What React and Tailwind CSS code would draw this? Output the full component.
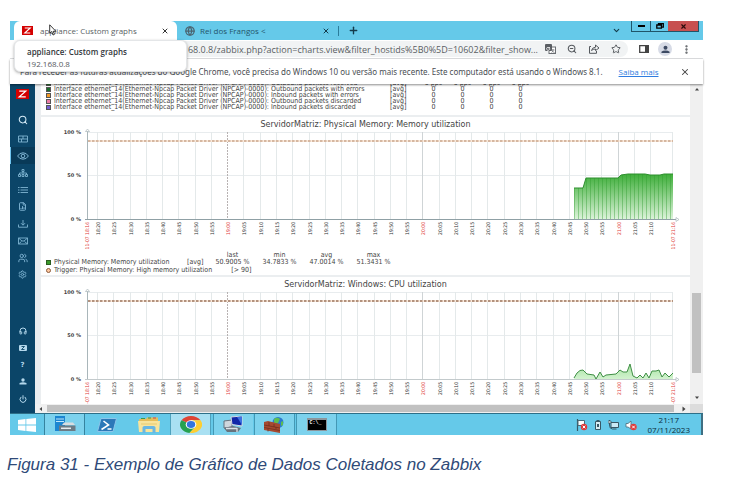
import React from "react";
import {
  Search, Users, Settings, FileChartColumn,
  Headphones, Power, X, Plus, ChevronDown, Star, ZoomOut,
  EllipsisVertical, Globe,
} from "lucide-react";

const ui = "font-['Open_Sans','Noto_Sans',sans-serif]";
const dv = "font-['DejaVu_Sans',sans-serif]";
const dvc = "font-['DejaVu_Sans_Condensed','DejaVu_Sans',sans-serif]";

const line = { viewBox: "0 0 10 8", className: "h-[8px] w-[10px]", fill: "none", stroke: "currentColor", strokeWidth: ".9", "aria-hidden": true };

const mainNav = [
  ["Dashboards", <svg {...line}><path d="M.5 1h9v6h-9zM.5 4h9M5 1v3M3.500 4v3" /></svg>],
  ["Monitoring", <svg viewBox="0 0 12 8" className="h-[8px] w-[12px]" fill="none" stroke="currentColor"><path d="M.6 4Q2.500.8 6 .8T11.400 4Q9.500 7.200 6 7.200T.6 4z" /><circle cx="6" cy="4" r="1.800" /></svg>],
  ["Services", <svg {...line}><path d="M4 .5h2v2H4zM5 2.500v2M1.500 5.500V4h7v1.500M.5 5.500h2v2h-2zM4 5.500h2v2H4zM7.500 5.500h2v2h-2z" /></svg>],
  ["Inventory", <svg {...line}><path d="M0 1.500h1.500M2.500 1.500H10M0 4h1.500M2.500 4H10M0 6.500h1.500M2.500 6.500H10" /></svg>],
  ["Reports", <FileChartColumn size={9} strokeWidth={2.5} />],
  ["Data collection", <svg {...line}><path d="M5 0v5M3 3.200l2 2 2-2M.5 4.500v2.700h9V4.500" /></svg>],
  ["Alerts", <svg {...line}><path d="M.5 1h9v6h-9zl3.500 3h2l3.500-3M.5 7l3-2.500M9.500 7l-3-2.500" /></svg>],
  ["Users", <Users size={10} strokeWidth={2.2} />],
  ["Administration", <Settings size={9} strokeWidth={2.4} />],
];

function ZLogo({ className }) {
  return (
    <svg viewBox="0 0 12 10" preserveAspectRatio="none" className={className} aria-hidden="true">
      <rect width="12" height="10" fill="#d40000" />
      <path d="M3 2.2h6L3 7.8h6" fill="none" stroke="#fff" strokeWidth="1.2" />
    </svg>
  );
}

function TabStrip() {
  return (
    <div className="flex h-[19px] items-start bg-[#65c9e9] pl-1">
      <div className="flex h-[19px] w-[163px] items-center rounded-t-md bg-white px-2">
        <ZLogo className="h-[9px] w-[11px] shrink-0" />
        <span className="ml-[7px] flex-1 truncate text-[8px] leading-[12px] text-[#5a5f64]">appliance: Custom graphs</span>
        <button aria-label="Fechar guia"><X size={8} strokeWidth={3} color="#333" /></button>
      </div>
      <div className="flex h-[19px] w-[161px] items-center px-2">
        <Globe size={10} strokeWidth={3} color="#4b6470" className="shrink-0" />
        <span className="ml-[5px] flex-1 truncate text-[8px] leading-[12px] text-[#24556b]">Rei dos Frangos &lt;</span>
        <button aria-label="Fechar guia"><X size={8} strokeWidth={3} color="#143b4b" /></button>
      </div>
      <span className="mt-[5px] h-[10px] w-px bg-[#2b7c9b]" />
      <button aria-label="Nova guia" className="ml-[9px] flex h-[19px] items-center"><Plus size={11} strokeWidth={3} color="#143b4b" /></button>
      <div className="flex-1" />
      <button aria-label="Pesquisar guias" className="mr-[10px] flex h-[19px] items-center"><ChevronDown size={9} strokeWidth={3} color="#143b4b" /></button>
      <div className="mr-1 flex h-[11px] border border-t-0 border-[#1f5569]">
        <button aria-label="Minimizar" className="flex w-[19px] items-center justify-center border-r border-[#1f5569]">
          <span className="h-[2px] w-[7px] bg-black" />
        </button>
        <button aria-label="Restaurar" className="flex w-[17px] items-center justify-center">
          <svg viewBox="0 0 8 6" className="h-[6px] w-[8px]"><path d="M2.5 1.5V.7h4.8v3.5H6M.8 2h4.6v3.2H.8z" fill="none" stroke="#000" strokeWidth="1.3" /></svg>
        </button>
        <button aria-label="Fechar" className="flex w-[30px] items-center justify-center bg-[#c75050]">
          <X size={7} strokeWidth={4} color="#2a0b0b" />
        </button>
      </div>
    </div>
  );
}

function Toolbar() {
  return (
    <div className="flex h-[19px] items-center border-b border-[#dfe1e3] bg-white pr-[11px] text-[#55595e]">
      <div className="ml-[140px] flex h-[16px] flex-1 items-center rounded-full bg-[#f1f3f4] pl-[15px] pr-[7px]">
        <input
          aria-label="Endereço"
          readOnly
          defaultValue="192.168.0.8/zabbix.php?action=charts.view&filter_hostids%5B0%5D=10602&filter_show..."
          className="min-w-0 flex-1 bg-transparent text-[9px] leading-[13px] text-[#5a5e63] outline-none"
        />
        <div className="ml-1 flex shrink-0 items-center gap-[11px]">
          <button aria-label="Traduzir">
            <svg viewBox="0 0 11 10" className="h-[10px] w-[11px]">
              <rect x="4" y="3" width="6.5" height="6.5" fill="#fff" stroke="#6a6e73" />
              <rect width="7" height="7" rx="1" fill="#5a5e63" />
              <path d="M5 3.5H2.2a1.6 1.6 0 1 0 2.6 1.2H3.6" stroke="#fff" strokeWidth=".8" fill="none" />
              <path d="M6.5 6h3M8 5v1q0 2-1.5 2.5M7 6.5q1 2 2.5 2" stroke="#6a6e73" strokeWidth=".7" fill="none" />
            </svg>
          </button>
          <button aria-label="Zoom"><ZoomOut size={10} strokeWidth={2.5} /></button>
          <button aria-label="Compartilhar">
            <svg viewBox="0 0 12 10" className="h-[10px] w-[12px]" fill="none" stroke="#55595e" strokeWidth="1">
              <path d="M3 2.5H1.5v6.8h7V7" /><path d="M3.5 6.5Q4 3.5 7.5 3.2V1L11 4 7.5 6.6V5Q5 5 3.500 6.5z" />
            </svg>
          </button>
          <button aria-label="Favoritos"><Star size={10} strokeWidth={2.3} /></button>
        </div>
      </div>
      <button aria-label="Painel lateral" className="ml-[11px]">
        <svg viewBox="0 0 10 8" className="h-[8px] w-[10px]"><path d="M.7.7h8.600v6.600H.7z" fill="none" stroke="#444" strokeWidth="1.3" /><path d="M6 0h4v8H6z" fill="#444" /></svg>
      </button>
      <button aria-label="Perfil" className="ml-[9px] flex size-[14px] items-center justify-center rounded-full bg-[#d7dbe6]">
        <svg viewBox="0 0 10 10" className="size-[9px]"><circle cx="5" cy="3" r="2.200" fill="#3d4a63" /><path d="M.5 9V7.500Q2 6 5 6t4.500 1.500V9z" fill="#3d4a63" /></svg>
      </button>
      <button aria-label="Menu" className="ml-[9px]"><EllipsisVertical size={11} strokeWidth={3} /></button>
    </div>
  );
}

function InfoBar() {
  return (
    <div className="relative z-10 flex h-[25px] items-center bg-white pl-[10px] pr-[13px] text-[8px] leading-[12px] text-[#4a4e53] shadow-[0_1px_2px_rgba(0,0,0,0.45)]">
      <p className="truncate font-['Noto_Sans',sans-serif]">
        Para receber as futuras atualizações do Google Chrome, você precisa do Windows 10 ou versão mais recente. Este computador está usando o Windows 8.1.
      </p>
      <a href="#saiba" className="ml-4 whitespace-nowrap text-[#2f7de0] underline">Saiba mais</a>
      <button aria-label="Dispensar" className="ml-auto"><X size={10} strokeWidth={2.5} color="#444" /></button>
    </div>
  );
}

function Sidebar() {
  const item = "flex h-[17px] w-full items-center justify-center";
  return (
    <nav aria-label="Zabbix" className="flex w-[25px] shrink-0 flex-col items-center bg-[#0b4568] pb-[6px] pt-[5px] text-[#7fb4d3]">
      <a href="#home" aria-label="Zabbix"><ZLogo className="h-[10px] w-[13px]" /></a>
      <button aria-label="Search" className="mb-[2px] mt-[12px] flex h-[17px] items-center text-[#d8edf8]"><Search size={10} strokeWidth={2.5} /></button>
      <div className="flex w-full flex-col">
        {mainNav.map(([label, icon], i) => (
          <button key={label} aria-label={label} className={i === 1 ? `${item} border-l border-[#6fc4f0] bg-[#093a58]` : item}>{icon}</button>
        ))}
      </div>
      <div className="mt-auto flex w-full flex-col text-[#b4d8ec]">
        <button aria-label="Support" className={item}><Headphones size={8} strokeWidth={3} /></button>
        <button aria-label="Integrations" className={item}>
          <svg viewBox="0 0 8 6" className="h-[6px] w-[8px]"><rect width="8" height="6" rx="1" fill="#b4d8ec" /><path d="M2.500 1.500h3l-3 3h3" fill="none" stroke="#0b4568" strokeWidth=".9" /></svg>
        </button>
        <button aria-label="Help" className={`${item} ${dv} text-[7px] font-bold leading-[10px]`}>?</button>
        <button aria-label="User settings" className={item}>
          <svg viewBox="0 0 8 7" className="h-[7px] w-[8px]" fill="currentColor"><circle cx="4" cy="2" r="1.700" /><path d="M.5 6.500V5Q4 3.600 7.500 5v1.500z" /></svg>
        </button>
        <button aria-label="Sign out" className={item}><Power size={8} strokeWidth={3} /></button>
      </div>
    </nav>
  );
}

const interfaceRows = [
  ["bg-[#2e7d32]", "Outbound packets received", "0 pps"],
  ["bg-[#1a6b2c]", "Outbound packets with errors", "0"],
  ["bg-[#f29a25]", "Inbound packets with errors", "0"],
  ["bg-[#ec7ba6]", "Outbound packets discarded", "0"],
  ["bg-[#7460d0]", "Inbound packets discarded", "0"],
];

function InterfaceLegend() {
  return (
    <div className="flex h-[31px] shrink-0 flex-col justify-end overflow-hidden bg-white pb-[5px] pl-[5px]">
      <table className={`w-[489px] table-fixed border-collapse text-[7px] leading-[6px] text-[#444] ${dvc}`}>
        <colgroup><col className="w-[344px]" /><col className="w-[29px]" /><col className="w-[29px]" /><col className="w-[29px]" /><col className="w-[29px]" /><col className="w-[29px]" /></colgroup>
        <tbody>
          {interfaceRows.map(([swatch, name, value]) => (
            <tr key={name} className="h-[6px]">
              <th scope="row" className="whitespace-nowrap p-0 text-left font-normal">
                <span className="flex h-[6px] items-center gap-[3px]">
                  <span className={`size-[5px] border border-[#555] ${swatch}`} />
                  Interface ethernet_14(Ethernet-Npcap Packet Driver (NPCAP)-0000): {name}
                </span>
              </th>
              <td className="p-0">[avg]</td>
              {[0, 1, 2, 3].map((k) => <td key={k} className="whitespace-nowrap p-0 text-center">{value}</td>)}
            </tr>
          ))}
        </tbody>
      </table>
    </div>
  );
}

const memory = [[574, 188], [583, 188], [586, 178], [618, 178], [621, 175], [628, 174], [645, 174], [650, 175], [660, 175], [664, 174], [673, 174]]
  .map(([x, y]) => [x - 41, y - 129]);
const cpu = [[574, 378], [577, 373], [580, 370.5], [583, 370], [587, 374], [594, 375], [596, 379], [600, 372], [603, 377], [606, 375], [616, 374], [620, 370], [623, 372], [627, 372], [630, 364], [633, 376], [637, 378], [640, 375], [643, 378], [646, 373], [649, 378], [652, 371], [656, 371], [659, 370], [662, 377], [665, 373], [669, 377], [673, 373]]
  .map(([x, y]) => [x - 41, y - 289]);

const ticks = Array.from({ length: 35 }, (_, i) => {
  const m = 20 + i * 5;
  return { x: 57 + i * 16.27, label: `${18 + Math.floor(m / 60)}:${String(m % 60).padStart(2, "0")}`, hour: m % 60 === 0 };
});

function Plot({ id, data, triggerColor, solid }) {
  const points = data.map((p) => p.join(",")).join(" ");
  const area = `${data[0][0]},90 ${points} 632,90`;
  return (
    <svg viewBox="0 0 649 122" className={`block w-full ${dv}`} role="img" aria-label={id}>
      <defs>
        <linearGradient id={id} x1="0" x2="0" y1="0" y2="1">
          <stop offset="0" stopColor={solid ? "#3fae3a" : "#a5e3a0"} />
          <stop offset="1" stopColor={solid ? "#dcf3da" : "#d2f2cf"} />
        </linearGradient>
        <clipPath id={`${id}-clip`}><polygon points={area} /></clipPath>
      </defs>
      <path d="M46 3.500H632M46 46.500H632" stroke="#e8ecee" />
      {ticks.map((t) => (
        <path key={t.label} d={`M${Math.round(t.x) - 0.5} 3V90`} stroke={t.label === "19:00" ? "#b8b2b2" : t.hour ? "#cfd4d6" : "#e4e9ea"} strokeDasharray={t.label === "19:00" ? "2 1" : undefined} />
      ))}
      <path d="M631.500 3V90" stroke="#e4e9ea" />
      <polygon points={area} fill={`url(#${id})`} />
      {solid && (
        <g clipPath={`url(#${id}-clip)`} stroke="#2c9a2c" strokeOpacity=".4">
          {Array.from({ length: 26 }, (_, i) => <path key={i} d={`M${533.5 + i * 4} 40V90`} />)}
        </g>
      )}
      <polyline points={points} fill="none" stroke={solid ? "#2f8f2f" : "#3f8f45"} strokeWidth="1" />
      <path d="M46 12H632" stroke="#fbeadb" strokeWidth="2" />
      <path d="M47 12H632" stroke={triggerColor} strokeWidth="1.200" strokeDasharray="2.500 1.500" />
      <path d="M46.500 1V90" stroke="#a9b6ba" />
      <path d="M44 90.500H637" stroke={solid ? "#8fa0a5" : "#c3cacc"} />
      <path d="M44.500 2.500l2-2.500 2 2.500z" fill="#fff" stroke="#a9b6ba" strokeWidth=".7" />
      <path d="M635 88.500l3 2-3 2z" fill="#fff" stroke="#a9b6ba" strokeWidth=".7" />
      <g fontSize="5" fontWeight="bold" fill="#444" textAnchor="end">
        <text x="40" y="5">100 %</text>
        <text x="40" y="48">50 %</text>
        <text x="40" y="92">0 %</text>
      </g>
      <g fontSize="5" textAnchor="end" className={dvc}>
        {ticks.map((t) => (
          <text key={t.label} transform={`translate(${Math.round(t.x) + 2} 93) rotate(-90)`} fill={t.hour ? "#e03a3a" : "#333"}>{t.label}</text>
        ))}
        <text transform="translate(48 93) rotate(-90)" fill="#e03a3a">11-07 18:16</text>
        <text transform="translate(634 93) rotate(-90)" fill="#e03a3a">11-07 21:16</text>
      </g>
    </svg>
  );
}

function Chart({ title, children }) {
  return (
    <section className="bg-white pt-1">
      <h2 className="text-center text-[8px] leading-[8px] text-[#444]">{title}</h2>
      {children}
    </section>
  );
}

function MemoryLegend() {
  return (
    <div className={`pb-px pl-[5px] pt-px text-[7px] leading-[7px] text-[#444] ${dvc}`}>
      <table className="w-[351px] table-fixed border-collapse">
        <colgroup><col className="w-[141px]" /><col className="w-[22px]" /><col className="w-[47px]" /><col className="w-[47px]" /><col className="w-[47px]" /><col className="w-[47px]" /></colgroup>
        <thead>
          <tr><td className="p-0" /><td className="p-0" />{["last", "min", "avg", "max"].map((h) => <th key={h} scope="col" className="p-0 text-center font-normal">{h}</th>)}</tr>
        </thead>
        <tbody>
          <tr>
            <th scope="row" className="whitespace-nowrap p-0 text-left font-normal">
              <span className="flex items-center gap-[3px]"><span className="size-[5px] border border-[#2b5d20] bg-[#3a9a2c]" />Physical Memory: Memory utilization</span>
            </th>
            <td className="p-0">[avg]</td>
            {["50.9005 %", "34.7833 %", "47.0014 %", "51.3431 %"].map((v) => <td key={v} className="whitespace-nowrap p-0 text-center">{v}</td>)}
          </tr>
        </tbody>
      </table>
      <p className="flex items-center gap-[3px] pt-px">
        <span className="size-[5px] rounded-full border border-[#8a5a3c] bg-[#ffc8a0]" />
        <span>Trigger: Physical Memory: High memory utilization</span>
        <span className="ml-4">[&gt; 90]</span>
      </p>
    </div>
  );
}

function Arrow({ d }) {
  return <svg viewBox="0 0 6 6" className="size-[6px]" aria-hidden="true"><path d={d} fill="#444" /></svg>;
}

function Page() {
  return (
    <div className="flex h-[329px]">
      <Sidebar />
      <div className="flex min-w-0 flex-1 flex-col">
        <div className="flex min-h-0 flex-1">
          <main className={`flex min-w-0 flex-1 flex-col gap-[2px] overflow-hidden bg-[#ebeef0] pl-[6px] ${dv}`}>
            <InterfaceLegend />
            <Chart title="ServidorMatriz: Physical Memory: Memory utilization">
              <Plot id="memory" data={memory} triggerColor="#b08468" solid />
              <MemoryLegend />
            </Chart>
            <Chart title="ServidorMatriz: Windows: CPU utilization">
              <Plot id="cpu" data={cpu} triggerColor="#6b3a22" />
            </Chart>
          </main>
          <div className="flex w-[13px] flex-col items-center bg-[#f0f0f0] pb-[3px] pt-[2px]">
            <Arrow d="M1 4.500l2-2.500 2 2.500z" />
            <div className="mt-auto h-[80px] w-[9px] bg-[#c1c1c1]" />
            <div className="mt-[22px]"><Arrow d="M1 1.500l2 2.500 2-2.500z" /></div>
          </div>
        </div>
        <div className="flex h-[9px] items-center bg-[#f0f0f0] pl-[3px]">
          <Arrow d="M4 1L1.500 3 4 5z" />
          <div className="ml-[3px] h-[7px] flex-1 bg-[#c1c1c1]" />
          <div className="ml-[7px] mr-[3px]"><Arrow d="M1.500.500L4.500 3l-3 2.500z" /></div>
          <div className="h-full w-[13px] bg-[#dcdcdc]" />
        </div>
      </div>
    </div>
  );
}

function BadBadge({ x }) {
  return (<g><circle cx={x} cy="8" r="3.200" fill="#dc3c3c" /><path d={`M${x - 1.3} 6.700l2.600 2.600m0-2.600l-2.600 2.600`} stroke="#fff" strokeWidth="1" /></g>);
}

function Taskbar() {
  const b = "flex h-full items-center justify-center";
  return (
    <div className="flex h-[22px] border-t border-[#2d6f88] bg-[#65c9e9]">
      <button aria-label="Iniciar" className={`${b} w-[34px]`}>
        <svg viewBox="0 0 18 14" className="h-[14px] w-[18px]" fill="#fff"><path d="M0 2l7.500-1v5.600H0zM8.300.900L18 0v6.600H8.300zM0 7.400h7.500V13L0 12zM8.300 7.400H18V14l-9.700-.9z" /></svg>
      </button>
      <button aria-label="Gerenciador do Servidor" className={`${b} w-[41px] border-x border-[#35839f] bg-[#7dd2ed]`}>
        <svg viewBox="0 0 22 17" className="h-[17px] w-[22px]"><path d="M1 0h10v15H1z" fill="#1c86d1" /><path d="M2 3h8M2 5.500h8" stroke="#bfe6fa" /><path d="M8 9l2-2.500h9L21 9z" fill="#d9dde0" /><path d="M5 9.500h16.500v5.500H5z" fill="#6d7b84" /><path d="M7 12.300h10" stroke="#e6ecef" strokeWidth="1.500" /></svg>
      </button>
      <button aria-label="PowerShell" className={`${b} w-[43px]`}>
        <svg viewBox="0 0 20 14" className="h-[14px] w-[20px]"><path d="M4 .5h15.500L16 13.500H.5z" fill="#2c78b8" stroke="#8cc5ea" /><path d="M6.500 3l5 4-7 4.500M10.500 11h4" fill="none" stroke="#fff" strokeWidth="1.600" /></svg>
      </button>
      <button aria-label="Explorador de Arquivos" className={`${b} w-[42px]`}>
        <svg viewBox="0 0 22 16" className="h-[16px] w-[22px]"><path d="M1 2h7l1-1.500h11V14H1z" fill="#e5bd5a" /><path d="M3 1.500h4M10 1h3" stroke="#3a9a4e" strokeWidth="1.200" /><path d="M15 1h3" stroke="#c55" strokeWidth="1.200" /><path d="M0 4h22l-1 11H1z" fill="#f8e49c" /><path d="M4.500 16v-5.500q0-1.500 2-1.500h9q2 0 2 1.500V16h-3v-4h-7v4z" fill="#69b7e3" /><path d="M3 7h16" stroke="#e8ca70" /></svg>
      </button>
      <button aria-label="Google Chrome" className={`${b} w-[41px] border-x border-[#4fa2be] bg-[#a9e0f2]`}>
        <svg viewBox="0 0 22 18" preserveAspectRatio="none" className="h-[17px] w-[22px]"><path d="M11 9L1.500 4.500A11 9 0 0 1 20.500 4.500H11z" fill="#dd4435" /><path d="M11 9L1.500 4.500A11 9 0 0 0 9.500 18L15.500 11z" fill="#26a150" /><path d="M11 4.500h9.500A11 9 0 0 1 9.500 18L15.700 11z" fill="#fdce33" /><ellipse cx="11" cy="9" rx="5.300" ry="4.600" fill="#fff" /><ellipse cx="11" cy="9" rx="4.200" ry="3.600" fill="#3275dd" /></svg>
      </button>
      <button aria-label="Conexão Remota" className={`${b} ml-[2px] w-[40px] border-l border-[#4398b5] bg-[#7dd2ed]`}>
        <svg viewBox="0 0 21 17" className="h-[17px] w-[21px]"><path d="M1 5l8-1v7l-8 1z" fill="#cfd6dc" stroke="#67737d" /><path d="M8 1l11-1v10L9 8.500z" fill="#1127a8" stroke="#d5dbe2" /><path d="M14 1l5-.500V9z" fill="#3d70e0" /><path d="M1 12l9-2 8 2-3 4H4z" fill="#68727c" /><path d="M3 12.500h11M14 12v4" stroke="#dde3e7" strokeWidth="1.300" /></svg>
      </button>
      <button aria-label="Firewall" className={`${b} ml-[1px] w-[41px] border-x border-[#4398b5] bg-[#7dd2ed]`}>
        <svg viewBox="0 0 21 16" className="h-[16px] w-[21px]"><circle cx="14" cy="5.500" r="5.500" fill="#2c79d0" /><path d="M10 2q3-2.500 6 0l-2 4-4 1zM17 5l2-1v4l-2 1z" fill="#5dbd52" /><path d="M0 5l4-1 12 3v9L0 13z" fill="#a6492f" /><path d="M0 8l16 3M0 10.500l16 3M5 5v4M10 7v3M4 11.500v3M12 10v2" stroke="#6b2a1c" strokeWidth=".7" /></svg>
      </button>
      <button aria-label="Prompt de Comando" className={`${b} ml-[1px] w-[41px] border-x border-[#4398b5] bg-[#7dd2ed]`}>
        <span className="flex h-[13px] w-[20px] items-start border border-t-2 border-[#8c959b] bg-black pl-[2px] font-['Liberation_Mono',monospace] text-[5px] font-bold leading-[6px] text-white">C:\_</span>
      </button>
      <div className="flex-1" />
      <div className="mr-[11px] flex items-center gap-[6px]">
        <svg viewBox="0 0 12 12" className="size-[12px]" role="img" aria-label="Alertas"><path d="M1.500 0v12" stroke="#385866" strokeWidth="1.200" /><path d="M2 1.500h6.500v5H2z" fill="#fff" stroke="#486b79" /><BadBadge x={8} /></svg>
        <svg viewBox="0 0 8 10" className="h-[10px] w-[8px]" role="img" aria-label="Dispositivo"><path d="M1.500 1.500h5v8h-5z" fill="#d9eef5" stroke="#385866" /><path d="M2.500 0h3v2h-3zM3 4h2v3H3z" fill="#385866" /></svg>
        <svg viewBox="0 0 11 10" className="h-[10px] w-[11px]" role="img" aria-label="Rede"><path d="M3 2.500h7.500v5H3z" fill="#c9eaf5" stroke="#385866" /><path d="M1.500 0v5q0 4 3 4h4" fill="none" stroke="#385866" /><path d="M0 1h3v2H0z" fill="#e8f7fb" stroke="#385866" strokeWidth=".7" /></svg>
        <svg viewBox="0 0 12 12" className="size-[12px]" role="img" aria-label="Som"><path d="M1 4.500h2L6 2v8L3 8H1z" fill="#fff" stroke="#486b79" strokeWidth=".8" /><BadBadge x={8.500} /></svg>
      </div>
      <time className="mr-[11px] flex flex-col items-center justify-center text-[8px] leading-[10px] text-[#0b2d3a]">
        <span>21:17</span><span>07/11/2023</span>
      </time>
      <button aria-label="Mostrar área de trabalho" className="w-[2px] bg-[#3f6f82]" />
    </div>
  );
}

export default function App() {
  return (
    <div className="min-h-screen bg-white pt-[21px]">
      <figure>
        <div className={`relative ml-[10px] mr-[31px] ${ui}`}>
          <TabStrip />
          <Toolbar />
          <InfoBar />
          <Page />
          <Taskbar />
          <div role="tooltip" className="absolute left-1 top-[19px] z-20 w-[173px] rounded-md border border-[#e4e6e8] bg-white px-3 pb-px pt-[5px] shadow-[0_1px_3px_rgba(0,0,0,0.35)]">
            <p className="text-[8px] font-semibold leading-[12px] text-[#33373b]">appliance: Custom graphs</p>
            <p className="text-[8px] leading-[12px] text-[#55595e]">192.168.0.8</p>
          </div>
          <svg viewBox="0 0 8 12" className="absolute left-[39px] top-[3px] z-30 h-[12px] w-[8px]" aria-hidden="true"><path d="M.7.800v8.400l2-1.700L4 11l1.500-.700-1.300-3h2.700z" fill="#fff" stroke="#222" strokeWidth=".9" /></svg>
        </div>
        <figcaption className="ml-[7px] mt-5 font-['Liberation_Sans',Arial,sans-serif] text-[17px] italic leading-5 text-[#2f4a78]">
          Figura 31 - Exemplo de Gráfico de Dados Coletados no Zabbix
        </figcaption>
      </figure>
    </div>
  );
}
